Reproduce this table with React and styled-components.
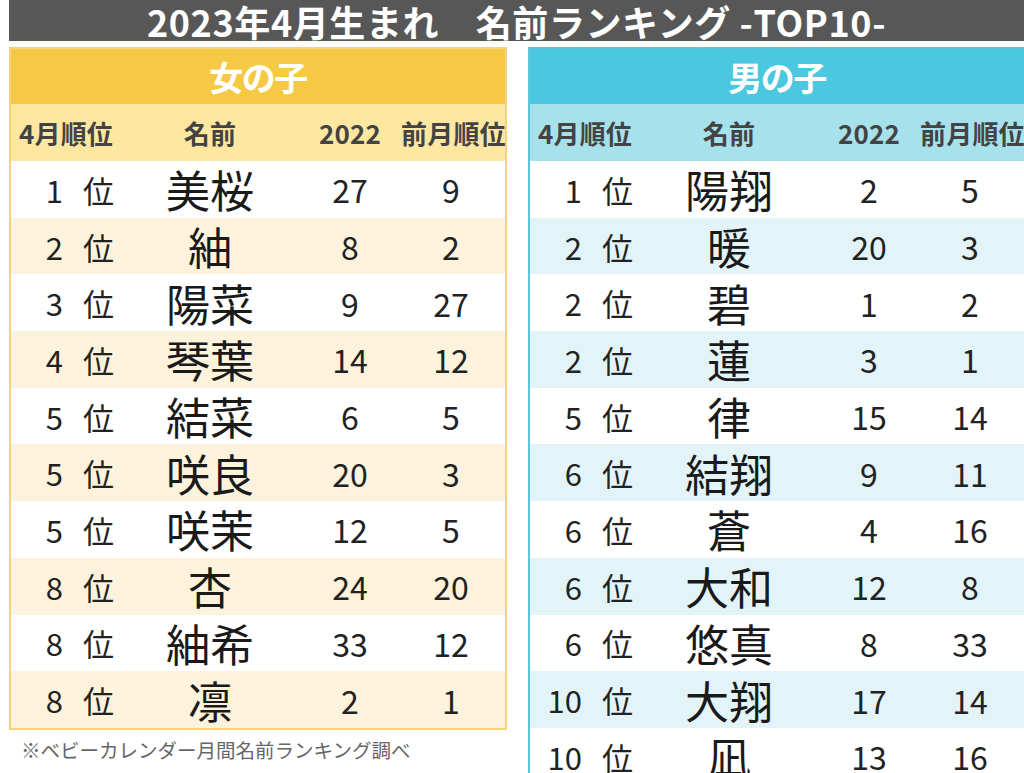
import { styled, createGlobalStyle } from 'styled-components'

const GlobalStyle = createGlobalStyle`
  html, body {
    margin: 0;
    padding: 0;
    background: #ffffff;
    overflow: hidden;
  }
  body {
    font-family: "Noto Sans CJK JP", "Noto Sans", sans-serif;
  }
`

const girls = [
  [1, '美桜', 27, 9],
  [2, '紬', 8, 2],
  [3, '陽菜', 9, 27],
  [4, '琴葉', 14, 12],
  [5, '結菜', 6, 5],
  [5, '咲良', 20, 3],
  [5, '咲茉', 12, 5],
  [8, '杏', 24, 20],
  [8, '紬希', 33, 12],
  [8, '凛', 2, 1],
]

const boys = [
  [1, '陽翔', 2, 5],
  [2, '暖', 20, 3],
  [2, '碧', 1, 2],
  [2, '蓮', 3, 1],
  [5, '律', 15, 14],
  [6, '結翔', 9, 11],
  [6, '蒼', 4, 16],
  [6, '大和', 12, 8],
  [6, '悠真', 8, 33],
  [10, '大翔', 17, 14],
  [10, '凪', 13, 16],
]

const palettes = {
  girl: { border: '#f4d37c', head: '#f6c944', sub: '#fde7a1', alt: '#fdf3dc' },
  boy: { border: '#5bc6da', head: '#4bc8df', sub: '#a6e1ec', alt: '#e3f4f9' },
}

const Page = styled.div`
  width: 1024px;
  height: 773px;
  padding-left: 9px;
  box-sizing: border-box;
  overflow: hidden;
`

const TitleBar = styled.div`
  height: 41px;
  background: #575757;
  color: #ffffff;
  font-weight: 700;
  font-size: 36px;
  line-height: 1;
  display: flex;
  align-items: center;
  justify-content: center;
  white-space: pre;
  letter-spacing: 0.6px;
  margin-bottom: 6px;
`

const Tables = styled.div`
  display: flex;
  gap: 21px;
  align-items: flex-start;
`

const Column = styled.div`
  display: flex;
  flex-direction: column;
  flex: none;
`

const Panel = styled.div`
  width: 498px;
  box-sizing: border-box;
  border: 2px solid ${({ $p }) => $p.border};
  border-bottom-width: ${({ $open }) => ($open ? '0' : '2px')};
`

const GenderHeader = styled.div`
  height: 55px;
  background: ${({ $p }) => $p.head};
  color: #ffffff;
  font-weight: 700;
  font-size: 34px;
  line-height: 1;
  display: flex;
  align-items: center;
  justify-content: center;
  letter-spacing: -1.5px;
`

const Row = styled.div`
  display: grid;
  grid-template-columns: 110px 178px 102px 100px;
  align-items: center;
  height: ${({ $h }) => $h}px;
  background: ${({ $bg }) => $bg};
  line-height: 1;
`

const HeadCell = styled.div`
  text-align: center;
  font-weight: 700;
  font-size: 26px;
  color: #434343;
  white-space: nowrap;
  letter-spacing: 0.2px;
`

const RankCell = styled.div`
  display: flex;
  justify-content: flex-end;
  align-items: center;
  gap: 20px;
  padding-right: 7px;
  font-size: 31px;
  color: #222222;
`

const NameCell = styled.div`
  text-align: center;
  font-size: 44px;
  color: #1a1a1a;
`

const NumCell = styled.div`
  text-align: center;
  font-size: 32px;
  color: #222222;
`

const Note = styled.div`
  margin: 8px 0 0 12px;
  font-size: 19.5px;
  line-height: 1.2;
  color: #666666;
  letter-spacing: 0;
`

const RankTable = ({ title, rows, p, open }) => (
  <Panel $p={p} $open={open}>
    <GenderHeader $p={p}>{title}</GenderHeader>
    <Row $h={57} $bg={p.sub}>
      <HeadCell>4月順位</HeadCell>
      <HeadCell>名前</HeadCell>
      <HeadCell>2022</HeadCell>
      <HeadCell>前月順位</HeadCell>
    </Row>
    {rows.map(([rank, name, last, prev], i) => (
      <Row key={i} $h={56.7} $bg={i % 2 === 0 ? '#ffffff' : p.alt}>
        <RankCell>
          <span>{rank}</span>
          <span>位</span>
        </RankCell>
        <NameCell>{name}</NameCell>
        <NumCell>{last}</NumCell>
        <NumCell>{prev}</NumCell>
      </Row>
    ))}
  </Panel>
)

export default function App() {
  return (
    <Page>
      <GlobalStyle />
      <TitleBar>{'2023年4月生まれ　名前ランキング -TOP10-'}</TitleBar>
      <Tables>
        <Column>
          <RankTable title="女の子" rows={girls} p={palettes.girl} />
          <Note>※ベビーカレンダー月間名前ランキング調べ</Note>
        </Column>
        <Column>
          <RankTable title="男の子" rows={boys} p={palettes.boy} open />
        </Column>
      </Tables>
    </Page>
  )
}
